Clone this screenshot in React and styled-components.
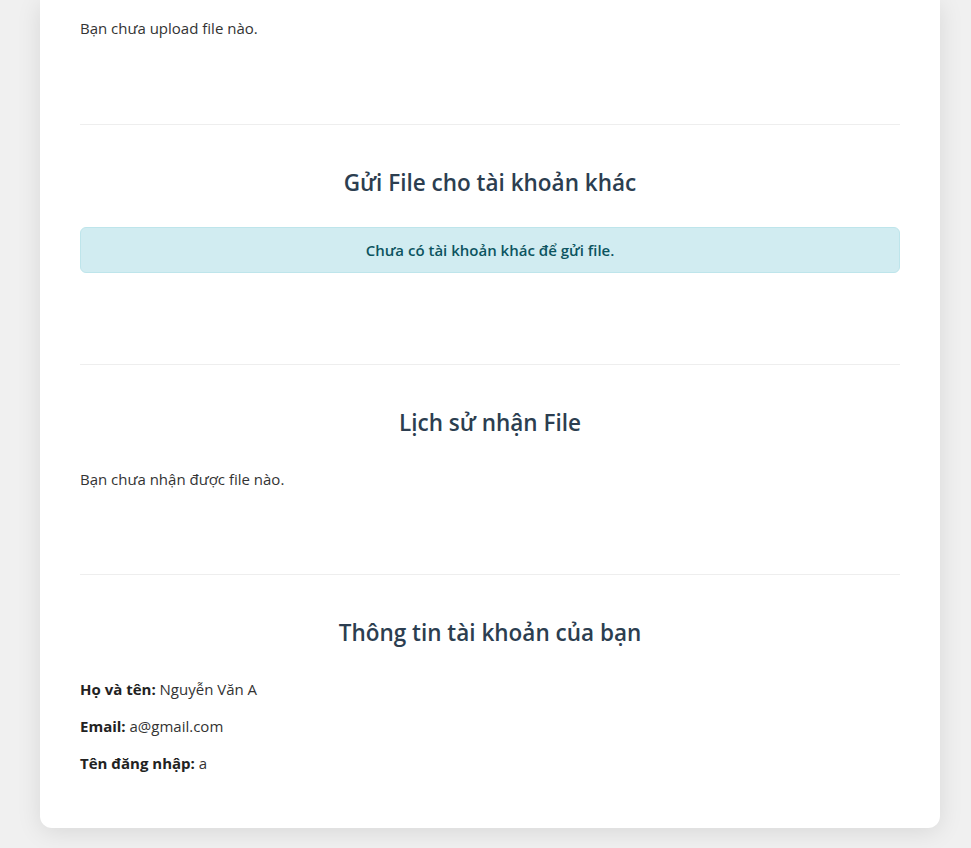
import React from 'react'
import styled, { createGlobalStyle } from 'styled-components'

const GlobalStyle = createGlobalStyle`
  html, body {
    margin: 0;
    padding: 0;
    background: #f0f0f0;
    font-family: "Open Sans", "Noto Sans", sans-serif;
    color: #333;
  }
`

const Page = styled.div`
  padding: 0 31px 20px 40px;
`

const Card = styled.div`
  background: #fff;
  border-radius: 0 0 12px 12px;
  box-shadow: 0 4px 24px rgba(0, 0, 0, 0.1);
  padding: 16px 40px 40px;
`

const Section = styled.section`
  padding: ${p => (p.first ? '0 0 68px' : '43px 0 67px')};
  border-bottom: ${p => (p.last ? 'none' : '1px solid #eee')};
  ${p => p.last && 'padding-bottom: 0;'}
`

const Title = styled.h2`
  margin: 0 0 30px;
  font-size: 22.5px;
  line-height: 29px;
  font-weight: 600;
  text-align: center;
  color: #2c3e50;
`

const Text = styled.p`
  margin: 0 0 16px;
  font-size: 15px;
  line-height: 24px;
`

const Alert = styled.div`
  margin-bottom: 24px;
  padding: 10px 16px;
  background: #d1ecf1;
  border: 1px solid #bee5eb;
  border-radius: 6px;
  color: #0c5460;
  font-size: 15px;
  line-height: 24px;
  font-weight: 600;
  text-align: center;
`

const InfoRow = styled.p`
  margin: 0 0 13px;
  font-size: 15px;
  line-height: 24px;
  color: #333;

  b {
    font-weight: 700;
    color: #222;
  }
`

export default function App() {
  return (
    <>
      <GlobalStyle />
      <Page>
        <Card>
          <Section first>
            <Text>Bạn chưa upload file nào.</Text>
          </Section>

          <Section>
            <Title>Gửi File cho tài khoản khác</Title>
            <Alert>Chưa có tài khoản khác để gửi file.</Alert>
          </Section>

          <Section>
            <Title>Lịch sử nhận File</Title>
            <Text>Bạn chưa nhận được file nào.</Text>
          </Section>

          <Section last>
            <Title>Thông tin tài khoản của bạn</Title>
            <InfoRow><b>Họ và tên:</b> Nguyễn Văn A</InfoRow>
            <InfoRow><b>Email:</b> a@gmail.com</InfoRow>
            <InfoRow><b>Tên đăng nhập:</b> a</InfoRow>
          </Section>
        </Card>
      </Page>
    </>
  )
}
